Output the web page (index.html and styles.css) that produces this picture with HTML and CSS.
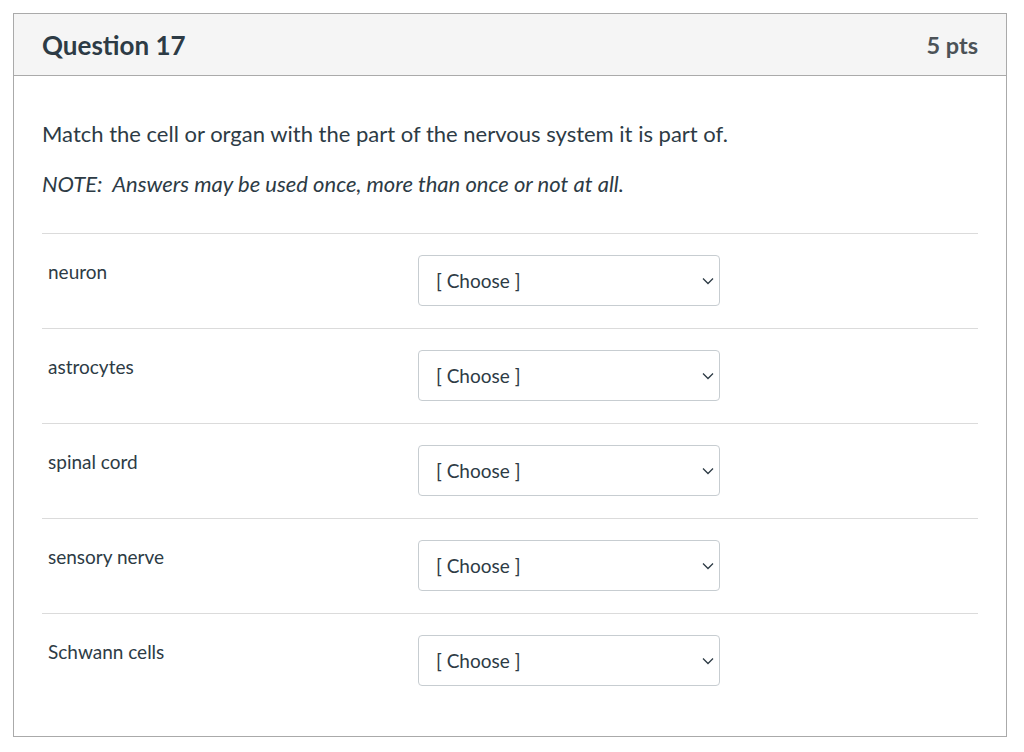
FILE: index.html
```html
<html>
  <head>
    <title>Question 17</title>
    <link rel="stylesheet" href="styles.css">
  </head>
  <body>
    <div class="question">
      <div class="question-header">
        <span class="question-name">Question 17</span>
        <span class="question-points">5 pts</span>
      </div>
      <div class="question-body">
        <p class="question-text">Match the cell or organ with the part of the nervous system it is part of.</p>
        <p class="question-note"><em>NOTE:&nbsp; Answers may be used once, more than once or not at all.</em></p>

        <div class="answers">
          <div class="answer">
            <div class="answer-label">neuron</div>
            <div class="answer-select"><span>[ Choose ]</span><svg class="chevron" viewBox="0 0 12 8"><path d="M1 1.5 L6 6.5 L11 1.5" /></svg></div>
          </div>
          <div class="answer">
            <div class="answer-label">astrocytes</div>
            <div class="answer-select"><span>[ Choose ]</span><svg class="chevron" viewBox="0 0 12 8"><path d="M1 1.5 L6 6.5 L11 1.5" /></svg></div>
          </div>
          <div class="answer">
            <div class="answer-label">spinal cord</div>
            <div class="answer-select"><span>[ Choose ]</span><svg class="chevron" viewBox="0 0 12 8"><path d="M1 1.5 L6 6.5 L11 1.5" /></svg></div>
          </div>
          <div class="answer">
            <div class="answer-label">sensory nerve</div>
            <div class="answer-select"><span>[ Choose ]</span><svg class="chevron" viewBox="0 0 12 8"><path d="M1 1.5 L6 6.5 L11 1.5" /></svg></div>
          </div>
          <div class="answer">
            <div class="answer-label">Schwann cells</div>
            <div class="answer-select"><span>[ Choose ]</span><svg class="chevron" viewBox="0 0 12 8"><path d="M1 1.5 L6 6.5 L11 1.5" /></svg></div>
          </div>
        </div>
      </div>
    </div>
  </body>
</html>
```
FILE: styles.css
```css
body { margin: 0; padding: 13px 17px 0 13px; background: #fff; font-family: Lato, "Liberation Sans", sans-serif; color: #2d3b45; }

.question { border: 1px solid #aaaaaa; }

.question-header { display: flex; justify-content: space-between; align-items: center; height: 61px; padding: 0 28px; background: #f5f5f5; border-bottom: 1px solid #aaaaaa; }
.question-name { font-size: 26px; font-weight: 700; }
.question-points { font-size: 23.5px; font-weight: 700; color: #4c5257; }

.question-body { padding: 33px 28px 28px 28px; }
.question-text { margin: 0; font-size: 22px; line-height: 50px; }
.question-note { margin: 0; font-size: 22px; line-height: 50px; }

.answers { margin-top: 24px; }
.answer { display: flex; align-items: flex-start; border-top: 1px solid #dbdbdb; padding: 21px 0 22px 0; }
.answer-label { width: 370px; padding: 5px 0 0 6px; font-size: 19px; line-height: 24px; }

.answer-select { display: flex; justify-content: space-between; align-items: center; box-sizing: border-box; width: 302px; height: 51px; padding: 0 5px 0 17px; border: 1px solid #c7cdd1; border-radius: 4px; font-size: 19px; }
.chevron { width: 12px; height: 8px; fill: none; stroke: #2d3b45; stroke-width: 1.3; }
```
